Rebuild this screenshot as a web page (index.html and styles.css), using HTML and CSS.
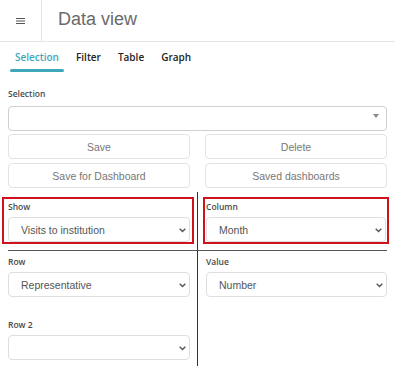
FILE: index.html
```html
<!DOCTYPE html>
<html>
<head>
    <meta charset="utf-8">
    <meta name="viewport" content="width=device-width, initial-scale=1">
    <title>Data view</title>
    <link rel="stylesheet" href="styles.css">
</head>
<body>
    <header class="topbar">
        <button class="menu-btn" aria-label="Menu">
            <svg width="9" height="6" viewBox="0 0 9 6">
                <rect x="0" y="0" width="9" height="1" fill="#555"/>
                <rect x="0" y="2.5" width="9" height="1" fill="#555"/>
                <rect x="0" y="5" width="9" height="1" fill="#555"/>
            </svg>
        </button>
        <h1 class="title">Data view</h1>
    </header>

    <nav class="tabs">
        <a class="tab active">Selection</a>
        <a class="tab">Filter</a>
        <a class="tab">Table</a>
        <a class="tab">Graph</a>
    </nav>

    <main class="content">
        <label class="field-label">Selection</label>
        <div class="select-wrap">
            <select class="select select-main"><option></option></select>
            <svg class="caret" width="6" height="4" viewBox="0 0 6 4"><path d="M0 0h6L3 4z" fill="#888"/></svg>
        </div>

        <div class="btn-grid">
            <button class="btn">Save</button>
            <button class="btn">Delete</button>
            <button class="btn">Save for Dashboard</button>
            <button class="btn">Saved dashboards</button>
        </div>

        <div class="pivot">
            <div class="cell cell-left cell-top">
                <div class="mark mark-left">
                    <label class="field-label">Show</label>
                    <div class="select-wrap">
                        <select class="select"><option>Visits to institution</option></select>
                        <svg class="chevron" width="7" height="5" viewBox="0 0 7 5"><path d="M0.7 0.8L3.5 3.6L6.3 0.8" fill="none" stroke="#555" stroke-width="1.4"/></svg>
                    </div>
                </div>
            </div>
            <div class="cell cell-right cell-top">
                <div class="mark mark-right">
                    <label class="field-label">Column</label>
                    <div class="select-wrap">
                        <select class="select"><option>Month</option></select>
                        <svg class="chevron" width="7" height="5" viewBox="0 0 7 5"><path d="M0.7 0.8L3.5 3.6L6.3 0.8" fill="none" stroke="#555" stroke-width="1.4"/></svg>
                    </div>
                </div>
            </div>
            <div class="cell cell-left">
                <label class="field-label">Row</label>
                <div class="select-wrap">
                    <select class="select"><option>Representative</option></select>
                    <svg class="chevron" width="7" height="5" viewBox="0 0 7 5"><path d="M0.7 0.8L3.5 3.6L6.3 0.8" fill="none" stroke="#555" stroke-width="1.4"/></svg>
                </div>
                <label class="field-label second">Row 2</label>
                <div class="select-wrap">
                    <select class="select"><option></option></select>
                    <svg class="chevron" width="7" height="5" viewBox="0 0 7 5"><path d="M0.7 0.8L3.5 3.6L6.3 0.8" fill="none" stroke="#555" stroke-width="1.4"/></svg>
                </div>
            </div>
            <div class="cell cell-right">
                <label class="field-label">Value</label>
                <div class="select-wrap">
                    <select class="select"><option>Number</option></select>
                    <svg class="chevron" width="7" height="5" viewBox="0 0 7 5"><path d="M0.7 0.8L3.5 3.6L6.3 0.8" fill="none" stroke="#555" stroke-width="1.4"/></svg>
                </div>
            </div>
        </div>
    </main>
</body>
</html>
```
FILE: styles.css
```css
* {
    box-sizing: border-box;
}
body {
    margin: 0;
    font-family: "Liberation Sans", Arial, sans-serif;
    background-color: #fff;
    color: #555;
}
.topbar {
    display: flex;
    align-items: stretch;
    height: 42px;
    border-bottom: 1px solid #e6e6e6;
}
.menu-btn {
    width: 42px;
    padding: 0;
    border: none;
    border-right: 1px solid #e6e6e6;
    background: none;
    display: flex;
    align-items: center;
    justify-content: center;
}
.title {
    margin: 0;
    padding-left: 16px;
    font-size: 18px;
    font-weight: normal;
    color: #6a6a6a;
    line-height: 39px;
}
.tabs {
    display: flex;
    gap: 7px;
    padding-left: 10px;
}
.tab {
    position: relative;
    padding: 8px 5px 8px;
    font-family: "Open Sans", sans-serif;
    font-weight: 600;
    font-size: 10px;
    line-height: 14px;
    color: #222;
}
.tab.active {
    color: #3ea8bb;
}
.tab.active::after {
    content: "";
    position: absolute;
    left: 0;
    right: 0;
    bottom: 0;
    height: 3px;
    border-radius: 2px;
    background-color: #3ea8bb;
}
.content {
    padding: 0 8px;
}
.field-label {
    display: block;
    margin: 16px 0 6px;
    font-family: "Open Sans", sans-serif;
    font-weight: 600;
    font-size: 8.5px;
    line-height: 12px;
    color: #4a4a4a;
}
.select-wrap {
    position: relative;
}
.select {
    display: block;
    width: 100%;
    height: 25px;
    padding: 0 20px 0 12px;
    appearance: none;
    border: 1px solid #dedede;
    border-radius: 4px;
    background: #fff;
    font-family: "Liberation Sans", Arial, sans-serif;
    font-size: 10.5px;
    color: #555;
}
.select-main {
    border-color: #cfcfcf;
}
.caret {
    position: absolute;
    right: 8px;
    top: 8px;
}
.chevron {
    position: absolute;
    right: 4px;
    top: 11px;
}
.btn-grid {
    display: grid;
    grid-template-columns: 1fr 1fr;
    column-gap: 15px;
    row-gap: 4px;
    margin-top: 3px;
}
.btn {
    height: 25px;
    border: 1px solid #e3e3e3;
    border-radius: 4px;
    background: #fff;
    font-family: "Liberation Sans", Arial, sans-serif;
    font-size: 10.5px;
    color: #777;
}
.pivot {
    display: grid;
    grid-template-columns: 190px 1fr;
    margin-top: 4px;
}
.cell {
    padding-top: 1px;
}
.cell .field-label {
    margin: 4px 0 4px;
}
.cell .field-label.second {
    margin-top: 22px;
}
.cell-left {
    padding-right: 7px;
    border-right: 1px solid #333;
    padding-bottom: 6px;
}
.cell-right {
    padding-left: 8px;
}
.cell-top {
    padding-top: 5px;
    padding-bottom: 6px;
    border-bottom: 1px solid #555;
}
.mark {
    border: 2px solid #d0121c;
    padding-top: 0;
}
.mark .field-label {
    margin-top: 2px;
}
.mark-left {
    margin: 0 -4px 0 -6px;
    padding: 0 2px 0 4px;
}
.mark-right {
    margin: 0 -2px 0 -3px;
    padding: 0 1px 0 1px;
}
```
